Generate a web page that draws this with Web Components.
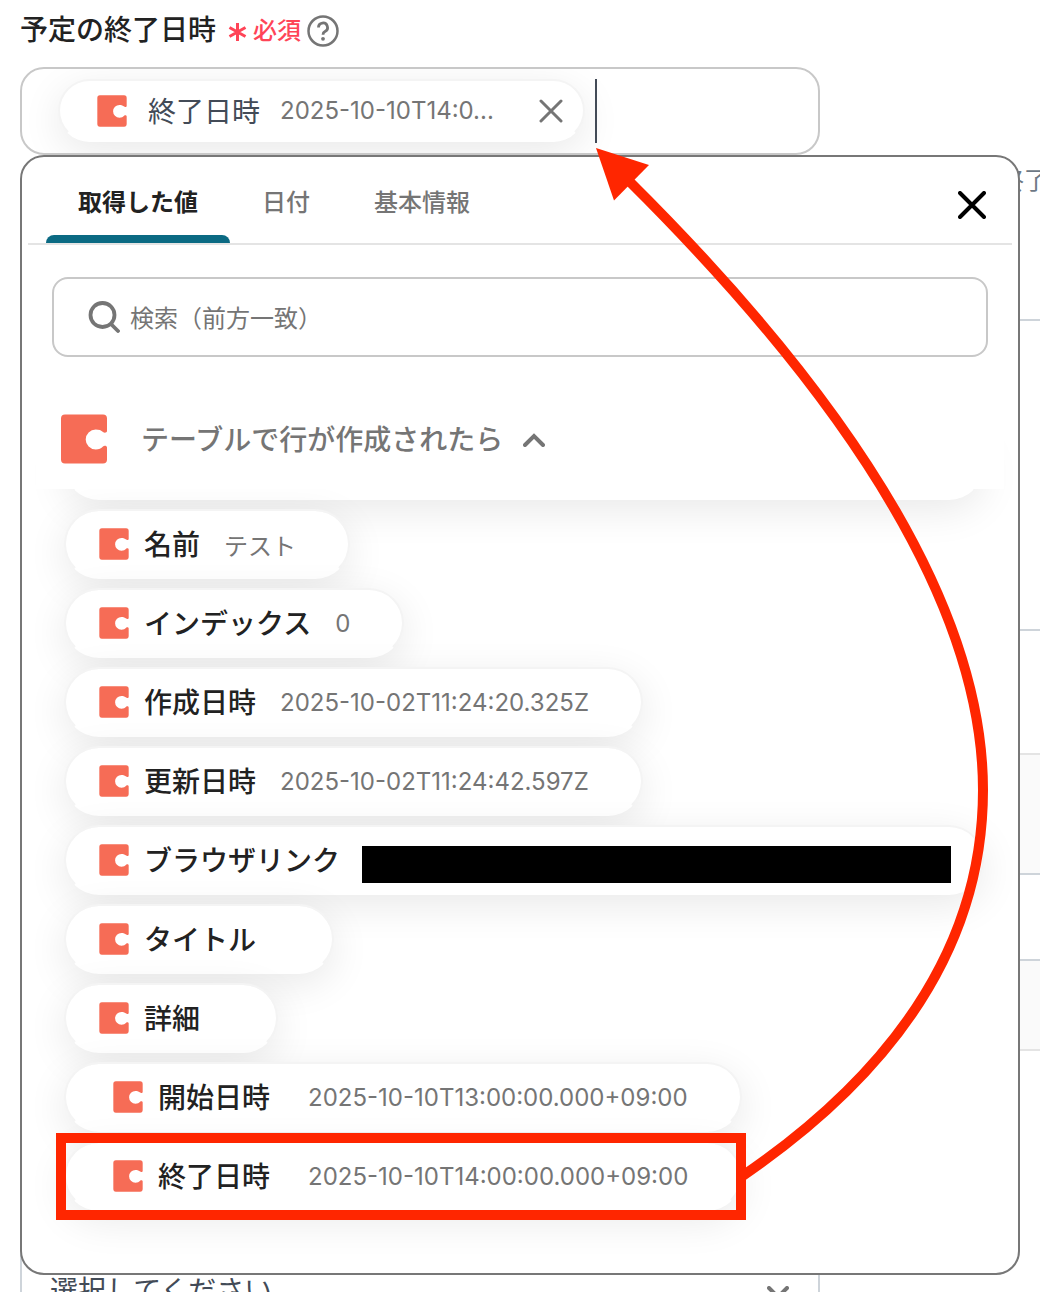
<!DOCTYPE html>
<html lang="ja">
<head>
<meta charset="utf-8">
<meta name="viewport" content="width=device-width, initial-scale=1">
<title>予定の終了日時</title>
<style>
  body {
    margin: 0;
    font-family: Inter, "Noto Sans CJK JP", sans-serif;
    color: #222;
    background: #fff;
  }
</style>
</head>
<body>
<form-page></form-page>

<script>
const controlCss = `
  * { box-sizing: border-box; }
  button, input, select {
    font: inherit;
    color: inherit;
    margin: 0;
    padding: 0;
    border: 0;
    background: none;
    outline: none;
  }
  button { cursor: pointer; }
  svg { display: block; flex: none; }
`;

/* AppLogo */
class AppLogo extends HTMLElement {
  constructor() {
    super();
    this.attachShadow({ mode: 'open' });
    this.shadowRoot.innerHTML = `
      <style>
        :host { display: block; flex: none; width: 30px; height: 32px; color: #f66c56; }
        :host([large]) { width: 48px; height: 50px; }
        svg { display: block; width: 100%; height: 100%; }
      </style>
      <svg viewBox="-.5 -.5 47 50" aria-hidden="true">
        <path fill="currentColor" d="M4 0h38a4 4 0 0 1 4 4v12.500c0 1.600-2.600 2.200-4 1c-1.700-1.700-4-2.500-7.300-2.500a10 10 0 0 0 0 20c3.300 0 5.600-1.200 7.300-3c1.400-1.300 4-.6 4 1V45a4 4 0 0 1-4 4H4a4 4 0 0 1-4-4V4a4 4 0 0 1 4-4z"/>
      </svg>
    `;
  }
}

/* ValueChip: one row of the picker, the value goes in the slot */
class ValueChip extends HTMLElement {
  constructor() {
    super();
    this.attachShadow({ mode: 'open' });
    this.shadowRoot.innerHTML = `
      <style>
        ${controlCss}
        :host { display: flex; max-width: 100%; }
        :host([wide]) { width: 100%; }
        button {
          display: flex;
          align-items: center;
          height: 70px;
          padding: 0 52px 0 33px;
          border: 2px solid #f4f4f4;
          border-bottom-color: #fff;
          border-radius: 35px;
          background: #fff;
          background-clip: padding-box;
          box-shadow: 0 10px 40px rgba(0, 0, 0, .09);
          white-space: nowrap;
        }
        .name { margin: 0 24px 0 15px; padding-bottom: 2px; font-size: 28px; font-weight: 500; }
        .value { font-size: 24px; color: #757575; }
        :host([nested]) button { padding-left: 47px; }
        :host([nested]) .name { margin-right: 38px; }
        :host([wide]) button { width: 100%; padding-right: 31px; }
        :host([wide]) .name { margin-right: 22px; }
        :host([wide]) .value { flex: 1; }
      </style>
      <button type="button">
        <app-logo></app-logo>
        <span class="name">${this.getAttribute('name') || ''}</span>
        <span class="value"><slot></slot></span>
      </button>
    `;
    if (!this.hasAttribute('name')) this.shadowRoot.querySelector('button').innerHTML = '';
  }
}

/* MaskedValue */
class MaskedValue extends HTMLElement {
  constructor() {
    super();
    this.attachShadow({ mode: 'open' });
    this.shadowRoot.innerHTML = `<style>:host { display: block; height: 37px; margin-top: 8px; background: #000; }</style>`;
  }
}

/* PickerTabs */
class PickerTabs extends HTMLElement {
  constructor() {
    super();
    this.attachShadow({ mode: 'open' });
    this.shadowRoot.innerHTML = `
      <style>
        ${controlCss}
        :host {
          display: flex;
          height: 88px;
          margin: 0 6px;
          padding: 0 18px;
          border-bottom: 2px solid #e4e4e4;
        }
        .tablist { display: flex; }
        .close { margin: 9px 0 0 auto; padding: 0 8px; color: #000; }
      </style>
      <div class="tablist" role="tablist">
        <slot></slot>
      </div>
      <button class="close" type="button" aria-label="閉じる">
        <svg width="28" height="28" viewBox="0 0 28 28" fill="none" stroke="currentColor" stroke-width="4" stroke-linecap="round">
          <path d="M2 2l24 24M26 2L2 26"/>
        </svg>
      </button>
    `;
  }
}

/* PickerTab */
class PickerTab extends HTMLElement {
  constructor() {
    super();
    this.attachShadow({ mode: 'open' });
    this.shadowRoot.innerHTML = `
      <style>
        ${controlCss}
        :host { display: flex; position: relative; color: #757575; }
        :host([selected]) { color: #222; }
        button {
          padding: 1px 32px 0;
          font-size: 24px;
          font-weight: 500;
        }
        :host([selected]) button { font-weight: 700; }
        :host([selected])::after {
          content: "";
          position: absolute;
          inset: auto 0 0;
          height: 8px;
          border-radius: 8px 8px 0 0;
          background: #0b6a83;
        }
      </style>
      <button type="button" role="tab" aria-selected="${this.hasAttribute('selected')}"><slot></slot></button>
    `;
  }
}

/* SearchBox */
class SearchBox extends HTMLElement {
  constructor() {
    super();
    this.attachShadow({ mode: 'open' });
    this.shadowRoot.innerHTML = `
      <style>
        ${controlCss}
        :host { display: block; }
        label {
          display: flex;
          align-items: center;
          gap: 10px;
          height: 80px;
          padding: 0 34px;
          border: 2px solid #c8c8c8;
          border-radius: 16px;
          color: #757575;
        }
        input { flex: 1; min-width: 0; height: 100%; padding-top: 2px; font-size: 24px; }
        input::placeholder { color: #757575; opacity: 1; }
      </style>
      <label>
        <svg width="32" height="32" viewBox="0 0 32 32" fill="none" stroke="currentColor" stroke-width="3.800" stroke-linecap="round" aria-hidden="true">
          <circle cx="14.500" cy="14" r="12"/>
          <path d="M23 23l7 7"/>
        </svg>
        <input type="text" placeholder="検索（前方一致）" aria-label="検索（前方一致）">
      </label>
    `;
  }
}

/* ValuePicker */
class ValuePicker extends HTMLElement {
  constructor() {
    super();
    this.attachShadow({ mode: 'open' });
    this.shadowRoot.innerHTML = `
      <style>
        ${controlCss}
        :host {
          display: block;
          border: 2px solid #777;
          border-radius: 24px;
          background: #fff;
          overflow: hidden;
        }
        search-box { margin: 32px 30px; }
        .group {
          position: relative;
          z-index: 1;
          display: flex;
          align-items: center;
          gap: 33px;
          width: calc(100% - 28px);
          margin: 0 14px;
          height: 100px;
          padding-left: 24px;
          background: #fff;
          color: #757575;
          font-size: 28px;
          font-weight: 500;
        }
        .group span { display: flex; align-items: center; gap: 20px; padding-bottom: 3px; }
        .group span svg { margin-top: 5px; }
        /* the first row is scrolled up behind the group heading */
        .list {
          display: flex;
          flex-direction: column;
          align-items: flex-start;
          gap: 9px;
          margin-top: -59px;
          padding: 0 34px 62px 42px;
        }
      </style>
      <picker-tabs>
        <picker-tab selected>取得した値</picker-tab>
        <picker-tab>日付</picker-tab>
        <picker-tab>基本情報</picker-tab>
      </picker-tabs>
      <search-box></search-box>
      <button class="group" type="button" aria-expanded="true">
        <app-logo large></app-logo>
        <span>テーブルで行が作成されたら
          <svg width="22" height="14" viewBox="0 0 22 14" fill="none" stroke="currentColor" stroke-width="4" stroke-linecap="round">
            <path d="M2 12l9-9 9 9"/>
          </svg>
        </span>
      </button>
      <div class="list">
        <value-chip wide></value-chip>
        <value-chip name="名前">テスト</value-chip>
        <value-chip name="インデックス">0</value-chip>
        <value-chip name="作成日時">2025-10-02T11:24:20.325Z</value-chip>
        <value-chip name="更新日時">2025-10-02T11:24:42.597Z</value-chip>
        <value-chip name="ブラウザリンク" wide><masked-value></masked-value></value-chip>
        <value-chip name="タイトル"></value-chip>
        <value-chip name="詳細"></value-chip>
        <value-chip name="開始日時" nested>2025-10-10T13:00:00.000+09:00</value-chip>
        <value-chip name="終了日時" nested>2025-10-10T14:00:00.000+09:00</value-chip>
      </div>
    `;
  }
}

/* TokenField */
class TokenField extends HTMLElement {
  constructor() {
    super();
    this.attachShadow({ mode: 'open' });
    this.shadowRoot.innerHTML = `
      <style>
        ${controlCss}
        :host { display: block; }
        .title { display: flex; align-items: center; height: 67px; padding-bottom: 10px; }
        label { padding-bottom: 2px; font-size: 28px; font-weight: 500; }
        .required {
          display: flex;
          align-items: center;
          gap: 6px;
          margin: 0 6px 0 12px;
          font-size: 24px;
          font-weight: 500;
          color: #ff4457;
        }
        .required svg { margin-top: 6px; }
        .help { margin-top: 4px; color: #757575; }
        .box {
          display: flex;
          align-items: flex-start;
          gap: 10px;
          height: 88px;
          padding: 10px 36px;
          border: 2px solid #c8c8c8;
          border-radius: 24px;
          overflow: hidden;
        }
        .token {
          display: flex;
          align-items: center;
          height: 63px;
          padding: 0 20px 0 37px;
          border: 2px solid #f4f4f4;
          border-bottom-color: #fff;
          border-radius: 32px;
          background: #fff;
          background-clip: padding-box;
          box-shadow: 0 10px 40px rgba(0, 0, 0, .09);
          white-space: nowrap;
        }
        .name { margin: 0 20px 0 21px; padding-bottom: 2px; font-size: 28px; color: #434b57; }
        .value { font-size: 24px; color: #757575; }
        .token button { margin-left: 45px; color: #757575; }
        .caret { flex: none; width: 2px; height: 64px; background: #434b57; }
        input { flex: 1; min-width: 0; height: 64px; }
      </style>
      <div class="title">
        <label for="value">予定の終了日時</label>
        <span class="required">
          <svg width="19" height="20" viewBox="0 0 19 20" fill="none" stroke="currentColor" stroke-width="3" aria-hidden="true">
            <path d="M9.500 1v18M1.500 5.500l16 9M17.500 5.500l-16 9"/>
          </svg>
          必須
        </span>
        <button class="help" type="button" aria-label="ヘルプ">
          <svg width="32" height="32" viewBox="0 0 32 32" fill="none" stroke="currentColor">
            <circle cx="16" cy="16" r="14.500" stroke-width="2.500"/>
            <path d="M11.500 12.500a4.500 4.500 0 1 1 6.500 4c-1.500.8-2 1.500-2 3.300" stroke-width="2.800"/>
            <circle cx="16" cy="23.800" r="1.900" fill="currentColor" stroke="none"/>
          </svg>
        </button>
      </div>
      <div class="box">
        <span class="token">
          <app-logo></app-logo>
          <span class="name">終了日時</span>
          <span class="value">2025-10-10T14:0...</span>
          <button type="button" aria-label="削除">
            <svg width="24" height="24" viewBox="0 0 24 24" fill="none" stroke="currentColor" stroke-width="3" stroke-linecap="round">
              <path d="M2 2l20 20M22 2L2 22"/>
            </svg>
          </button>
        </span>
        <span class="caret"></span>
        <input id="value" type="text">
      </div>
    `;
  }
}

/* ChoiceField */
class ChoiceField extends HTMLElement {
  constructor() {
    super();
    this.attachShadow({ mode: 'open' });
    this.shadowRoot.innerHTML = `
      <style>
        ${controlCss}
        :host { display: grid; align-items: center; height: 88px; color: #434b57; }
        select, svg { grid-area: 1 / 1; }
        select {
          appearance: none;
          width: 100%;
          height: 100%;
          padding: 0 28px;
          border: 2px solid #ced4da;
          border-radius: 8px;
          font-size: 28px;
        }
        svg { justify-self: end; margin: 4px 31px 0 0; color: #757575; pointer-events: none; }
      </style>
      <select aria-label="選択してください"><option>選択してください</option></select>
      <svg width="22" height="14" viewBox="0 0 22 14" fill="none" stroke="currentColor" stroke-width="4" stroke-linecap="round">
        <path d="M2 2l9 9 9-9"/>
      </svg>
    `;
  }
}

/* SidePreview: result table that continues past the right edge */
class SidePreview extends HTMLElement {
  constructor() {
    super();
    this.attachShadow({ mode: 'open' });
    this.shadowRoot.innerHTML = `
      <style>
        :host { display: block; color: #6d7885; font-size: 24px; }
        p { margin: 0 -8px 0 0; padding-top: 161px; height: 159px; text-align: right; white-space: nowrap; }
        div { box-sizing: border-box; border-top: 2px solid #ced4da; }
        .a { height: 310px; margin-top: -1px; }
        .b { height: 124px; }
        .c { height: 120px; background: #fafafa; border-color: #e4e4e4; }
        .d { height: 86px; }
        .e { height: 90px; background: #fafafa; }
        .f { height: 200px; border-color: #e4e4e4; }
      </style>
      <p>終了</p>
      <div class="a"></div>
      <div class="b"></div>
      <div class="c"></div>
      <div class="d"></div>
      <div class="e"></div>
      <div class="f"></div>
    `;
  }
}

/* FlowArrow: frame round the chosen value and the arrow up to the field */
class FlowArrow extends HTMLElement {
  constructor() {
    super();
    this.attachShadow({ mode: 'open' });
    this.shadowRoot.innerHTML = `
      <style>
        :host { position: absolute; top: 0; left: 0; z-index: 3; pointer-events: none; }
        svg { display: block; }
      </style>
      <svg width="1040" height="1292" viewBox="0 0 1040 1292" fill="none" stroke="#ff2600" stroke-width="10" aria-hidden="true">
        <rect x="61" y="1138" width="680" height="77"/>
        <path d="M628 180Q983 532 983 790Q983 1012 741 1177"/>
        <path d="M596 148l53 17-35 35.500z" fill="#ff2600" stroke="none"/>
      </svg>
    `;
  }
}

/* FormPage */
class FormPage extends HTMLElement {
  constructor() {
    super();
    this.attachShadow({ mode: 'open' });
    this.shadowRoot.innerHTML = `
      <style>
        :host {
          position: relative;
          display: grid;
          grid-template-columns: minmax(0, 4fr) minmax(0, 1fr);
          grid-template-rows: repeat(3, max-content);
          height: 100vh;
          padding: 0 20px;
          box-sizing: border-box;
          overflow: hidden;
        }
        token-field { grid-area: 1 / 1; }
        value-picker { grid-area: 2 / 1 / auto / -1; z-index: 2; }
        choice-field { grid-area: 3 / 1; margin-top: -28px; }
        side-preview { grid-area: 1 / 2 / span 3 / auto; margin-right: -20px; }
      </style>
      <token-field></token-field>
      <side-preview></side-preview>
      <value-picker></value-picker>
      <choice-field></choice-field>
      <flow-arrow></flow-arrow>
    `;
  }
}

customElements.define('app-logo', AppLogo);
customElements.define('masked-value', MaskedValue);
customElements.define('value-chip', ValueChip);
customElements.define('picker-tab', PickerTab);
customElements.define('picker-tabs', PickerTabs);
customElements.define('search-box', SearchBox);
customElements.define('value-picker', ValuePicker);
customElements.define('token-field', TokenField);
customElements.define('choice-field', ChoiceField);
customElements.define('side-preview', SidePreview);
customElements.define('flow-arrow', FlowArrow);
customElements.define('form-page', FormPage);
</script>
</body>
</html>
